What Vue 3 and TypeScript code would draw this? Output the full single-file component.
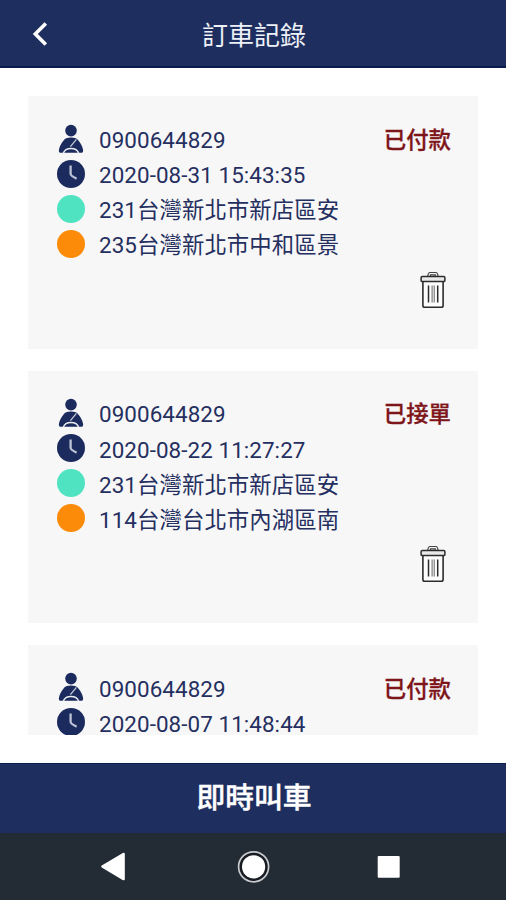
<script setup lang="ts">
interface Order {
  phone: string
  time: string
  from: string
  to: string
  status: string
}

const orders: Order[] = [
  { phone: '0900644829', time: '2020-08-31 15:43:35', from: '231台灣新北市新店區安', to: '235台灣新北市中和區景', status: '已付款' },
  { phone: '0900644829', time: '2020-08-22 11:27:27', from: '231台灣新北市新店區安', to: '114台灣台北市內湖區南', status: '已接單' },
  { phone: '0900644829', time: '2020-08-07 11:48:44', from: '', to: '', status: '已付款' },
]
</script>

<template>
  <div class="screen">
    <header class="top-bar">
      <button class="back" aria-label="返回">
        <svg width="18" height="26" viewBox="0 0 18 26"><path d="M14.8 2.4 4.3 13 14.8 23.6" fill="none" stroke="#fff" stroke-width="3.6" /></svg>
      </button>
      <h1>訂車記錄</h1>
    </header>

    <main class="list">
      <article v-for="order in orders" :key="order.time" class="card">
        <div class="details">
          <div class="row">
            <svg class="icon" viewBox="0 0 28 28">
              <circle cx="14" cy="5.6" r="5.8" fill="#1b2b5d" />
              <path d="M6.6 15.6 C7.6 13.6 10 12.6 14 12.6 C18 12.6 20.4 13.6 21.4 15.6 C23.6 18 25.3 21.3 26 24.4 C26.5 26.6 25.8 27.8 24 27.8 H4 C2.2 27.8 1.5 26.6 2 24.4 C2.7 21.3 4.4 18 6.6 15.6 Z" fill="#1b2b5d" />
              <path d="M19.4 14.4 13.4 21.6" fill="none" stroke="#c4cad9" stroke-width="1.3" />
              <path d="M6.4 28 C7.4 25 10 23.4 14 23.4 C18 23.4 20.6 25 21.6 28" fill="none" stroke="#eceef3" stroke-width="1.5" />
            </svg>
            <span>{{ order.phone }}</span>
          </div>
          <div class="row">
            <svg class="icon" viewBox="0 0 28 28">
              <circle cx="14" cy="14" r="14" fill="#1b2b5d" />
              <path d="M13.6 5.4 V14 Q13.8 16 19.6 18.6" fill="none" stroke="#bdc3d5" stroke-width="2.3" />
            </svg>
            <span>{{ order.time }}</span>
          </div>
          <div class="row">
            <i class="icon dot pickup"></i>
            <span>{{ order.from }}</span>
          </div>
          <div class="row">
            <i class="icon dot dropoff"></i>
            <span>{{ order.to }}</span>
          </div>
        </div>
        <div class="side">
          <strong>{{ order.status }}</strong>
          <button class="trash" aria-label="刪除">
            <svg width="26" height="38" viewBox="0 0 26 38" fill="none" stroke="#2c2c2e">
              <path d="M7.8 5.5 Q8 1.5 10 1.5 H15.8 Q17.8 1.5 18 5.5 M10.5 5.5 V3.8 H15.3 V5.5" stroke="#444447" stroke-width="1.2" />
              <path d="M2.9 10.8 V34.5 Q2.9 36.3 4.8 36.3 H21.2 Q23.1 36.3 23.1 34.5 V10.8" fill="#fdfdfd" stroke-width="1.6" />
              <rect x="1.1" y="5.6" width="23.8" height="5" rx="1.2" fill="#e9e9ea" stroke-width="1.5" />
              <path d="M8.5 14.5 V31.5 M17.7 14.5 V31.5" stroke-width="1.5" />
              <path d="M12.1 14.5 V31.5 M14.2 14.5 V31.5" stroke="#555558" stroke-width=".9" />
            </svg>
          </button>
        </div>
      </article>
    </main>

    <button class="call">即時叫車</button>

    <nav class="system-nav">
      <svg viewBox="0 0 506 67" width="506" height="67">
        <path d="M101.7 32.5 Q100.5 33.5 101.7 34.5 L122.6 47 Q124.8 48 124.8 46 V21 Q124.8 19 122.8 20 Z" fill="#fff" />
        <circle cx="253.6" cy="33.8" r="15" fill="#171b22" stroke="#c9cbce" stroke-width="1.7" />
        <circle cx="253.6" cy="33.8" r="11.6" fill="#fff" />
        <rect x="377.7" y="23" width="22" height="21.8" rx="1" fill="#fff" />
      </svg>
    </nav>
  </div>
</template>

<style>
body {
  margin: 0;
  overflow: hidden;
}
</style>

<style scoped>
.screen {
  display: flex;
  flex-direction: column;
  width: 506px;
  height: 900px;
  overflow: hidden;
  background: #fff;
  font-family: Roboto, "Noto Sans CJK TC", sans-serif;
}

button {
  padding: 0;
  border: 0;
  background: none;
  font-family: inherit;
}

.top-bar {
  box-sizing: border-box;
  display: grid;
  grid-template-columns: 60px 1fr 58px;
  align-items: center;
  flex: none;
  height: 68px;
  border-bottom: 2px solid #0a1b4d;
  background: #1e2f5f;
}

.back {
  display: flex;
  padding-left: 31px;
  padding-top: 2px;
}

h1 {
  margin: 5px 0 0;
  color: #eef1f8;
  font-size: 26px;
  font-weight: 400;
  line-height: 38px;
  text-align: center;
}

.list {
  box-sizing: border-box;
  display: flex;
  flex-direction: column;
  gap: 21.8px;
  flex: none;
  height: 638.7px;
  margin: 28.3px 28px 0;
  overflow: hidden;
}

.card {
  box-sizing: border-box;
  display: flex;
  justify-content: space-between;
  flex: none;
  height: 252.6px;
  padding: 25.7px 27px 0 28.6px;
  background: #f7f7f8;
}

.row {
  display: flex;
  align-items: center;
  gap: 14.4px;
  height: 35.15px;
  color: #252f60;
  font-size: 22.4px;
  letter-spacing: .08px;
  line-height: 35px;
  white-space: nowrap;
}

.row span {
  padding-top: 2px;
}

.icon {
  flex: none;
  width: 28px;
  height: 28px;
  margin-bottom: 2px;
  overflow: visible;
}

.dot {
  border-radius: 50%;
}

.pickup {
  background: #50e3c2;
}

.dropoff {
  background: #fb8b08;
}

.side {
  display: flex;
  flex-direction: column;
  align-items: flex-end;
}

strong {
  padding-top: 1px;
  color: #7e1519;
  font-size: 22.4px;
  font-weight: 500;
  line-height: 35px;
  -webkit-text-stroke: .3px #7e1519;
}

.trash {
  display: flex;
  margin: 113px 5px 0 0;
}

.call {
  flex: none;
  height: 70px;
  margin-top: 28px;
  padding-left: 2px;
  border-top: 1px solid #0a1b4d;
  background: #1e2f5f;
  color: #fff;
  font-size: 28.8px;
  font-weight: 500;
  line-height: 68px;
  -webkit-text-stroke: .4px #fff;
}

.system-nav {
  display: flex;
  flex: none;
  height: 67px;
  background: #232b34;
}
</style>
